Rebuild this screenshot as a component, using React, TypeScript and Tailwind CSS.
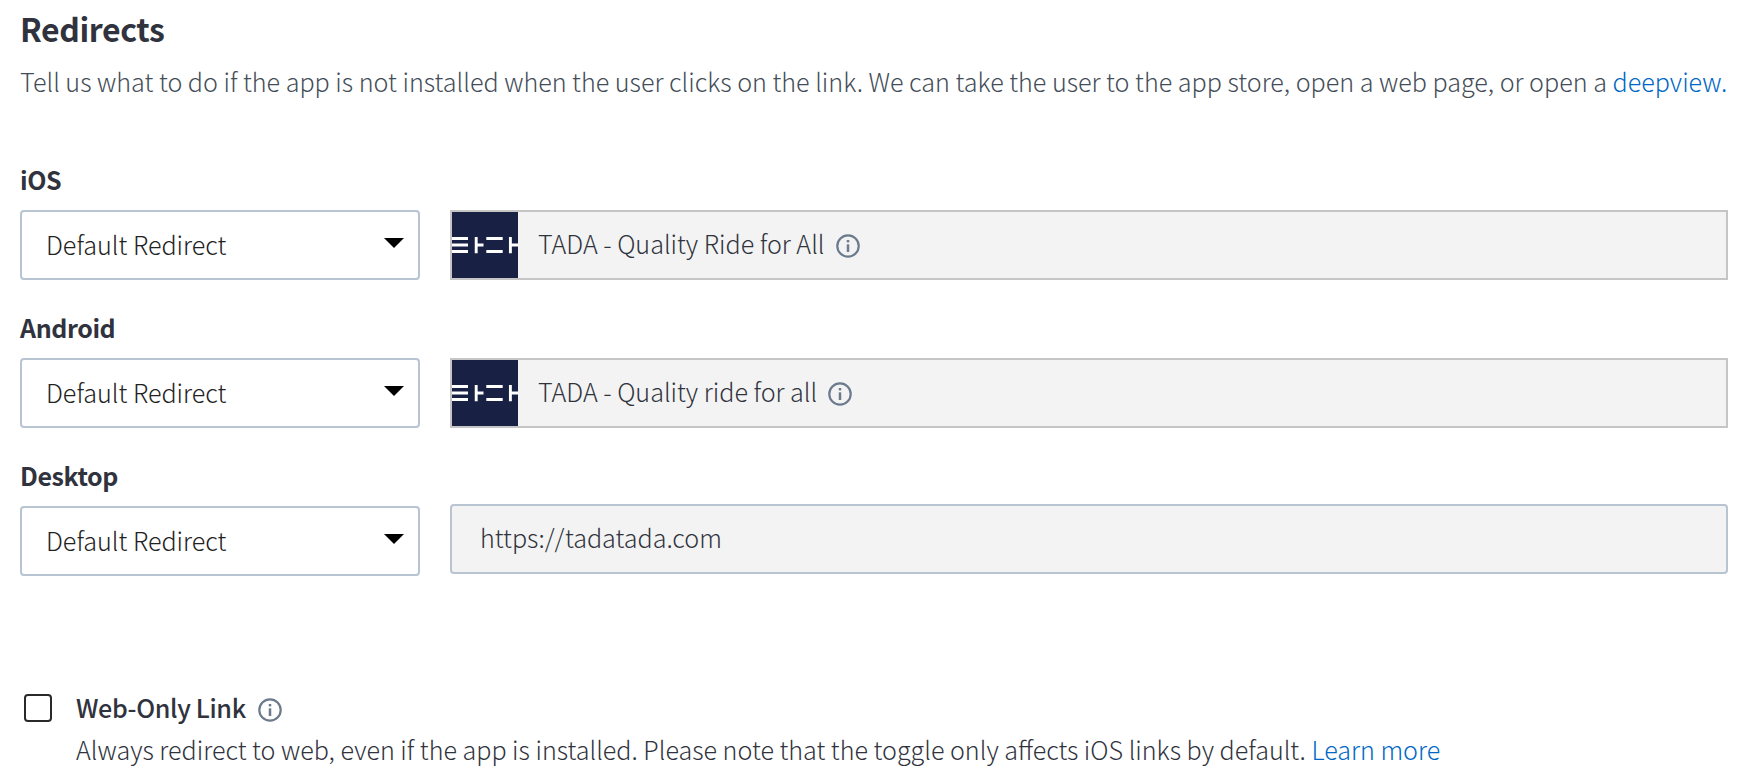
import type { ReactNode } from "react";

function InfoIcon() {
  return (
    <svg className="size-6 shrink-0" viewBox="0 0 24 24" fill="none">
      <circle cx="12" cy="12" r="10.7" stroke="#6b7b8d" strokeWidth="2.2" />
      <path d="M12 10.3v7.7" stroke="#6b7b8d" strokeWidth="2.5" />
      <path d="M12 6v2.4" stroke="#6b7b8d" strokeWidth="2.5" />
    </svg>
  );
}

function TadaLogo() {
  return (
    <svg className="size-[66px] shrink-0 bg-[#182044]" viewBox="0 0 66 66" stroke="#fff" strokeWidth="2.9" fill="none">
      <path d="M0 26.5h16M0 33h16M0 39.5h16" />
      <path d="M24.2 25v16.2M24 33h7.5" />
      <path d="M34.3 26.5h16.4M34.3 39.5h16.4" />
      <path d="M58.4 25v16.2M58 33h8" />
    </svg>
  );
}

function Select() {
  return (
    <button className="flex h-[70px] w-[400px] shrink-0 items-center justify-between rounded-[4px] border-2 border-[#b8c4d1] bg-white pl-6 pr-3.5 text-[#222]">
      <span className="mb-0.5 leading-[36px] font-light">Default Redirect</span>
      <svg className="mb-1 h-[10px] w-5" viewBox="0 0 20 10">
        <path d="M0 0h20L10 10z" fill="#000" />
      </svg>
    </button>
  );
}

function Row({ label, children }: { label: string; children: ReactNode }) {
  return (
    <section className="h-[148px]">
      <h2 className="h-[49px] text-[25px] leading-[36px] font-bold tracking-[-0.4px]">{label}</h2>
      <div className="flex gap-[30px]">
        <Select />
        {children}
      </div>
    </section>
  );
}

function AppBox({ name }: { name: string }) {
  return (
    <div className="flex h-[70px] flex-1 items-center border-2 border-[#c5c5c5] bg-[#f3f3f3]">
      <TadaLogo />
      <span className="mb-1 ml-5 leading-[36px] font-light">{name}</span>
      <span className="ml-[11px] mt-0.5">
        <InfoIcon />
      </span>
    </div>
  );
}

export default function App() {
  return (
    <main className="h-[772px] w-full overflow-hidden bg-white pl-5 pr-9 pt-1.5 font-['Noto_Sans_CJK_SC',sans-serif] text-[25.12px] text-[#30333d]">
      <h1 className="h-[57px] text-[32px] leading-[44px] font-bold tracking-[-0.4px]">Redirects</h1>
      <p className="h-[98px] whitespace-nowrap leading-[36px] font-light text-[#434d57]">
        Tell us what to do if the app is not installed when the user clicks on the link. We can take the user to the app store, open a web page, or open a{" "}
        <a className="text-[#0068c4]">deepview.</a>
      </p>
      <Row label="iOS">
        <AppBox name="TADA - Quality Ride for All" />
      </Row>
      <Row label="Android">
        <AppBox name="TADA - Quality ride for all" />
      </Row>
      <Row label="Desktop">
        <div className="-mt-0.5 flex h-[70px] flex-1 items-center rounded-[4px] border-2 border-[#b8c4d1] bg-[#f3f3f3] pl-7">
          <span className="mb-1 leading-[36px] font-light">https://tadatada.com</span>
        </div>
      </Row>
      <section className="flex gap-6 pl-1 pt-[84px]">
        <div className="mt-[5px] size-7 shrink-0 rounded-[4px] border-2 border-[#292929]" />
        <div>
          <div className="flex h-[42px] items-start">
            <span className="leading-[36px] font-medium tracking-[-0.35px]">Web-Only Link</span>
            <span className="ml-3 mt-[9px]">
              <InfoIcon />
            </span>
          </div>
          <p className="whitespace-nowrap text-[25.1px] leading-[36px] font-light">
            Always redirect to web, even if the app is installed. Please note that the toggle only affects iOS links by default.{" "}
            <a className="text-[#0068c4]">Learn more</a>
          </p>
        </div>
      </section>
    </main>
  );
}
